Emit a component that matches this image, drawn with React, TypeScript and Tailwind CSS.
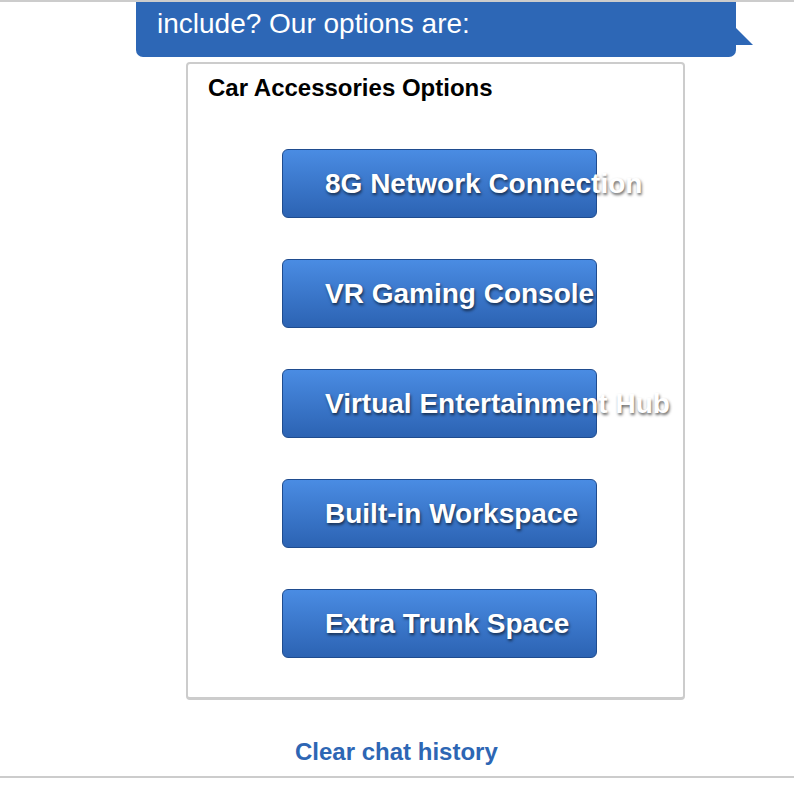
import React from 'react';

const options = [
  '8G Network Connection',
  'VR Gaming Console',
  'Virtual Entertainment Hub',
  'Built-in Workspace',
  'Extra Trunk Space',
];

const App = () => {
  return (
    <div className="w-[794px] h-[794px] bg-white overflow-hidden font-['Liberation_Sans',Arial,sans-serif]">
      <div className="h-[2px] w-full bg-[#cccccc]" />

      {/* bot message bubble, scrolled so only its last line shows */}
      <div className="relative ml-[136px] w-[600px] h-[55px] bg-[#2d67b6] rounded-b-[7px]">
        <p className="pl-[21px] pt-[6px] text-[28px] leading-[32px] text-white">
          include? Our options are:
        </p>
        <svg className="absolute left-[600px] top-[26px]" width="18" height="18" viewBox="0 0 18 18">
          <polygon points="0,0 17,17 0,17" fill="#2d67b6" />
        </svg>
      </div>

      <div className="ml-[186px] mt-[5px] w-[499px] h-[638px] border-2 border-[#cccccc] border-b-[3px] rounded-[4px] bg-white">
        <h3 className="pl-[20px] pt-[10px] text-[24px] leading-[28px] font-bold text-black">
          Car Accessories Options
        </h3>
        <div className="mt-[47px] ml-[94px] flex flex-col gap-[41px]">
          {options.map((option, index) => (
            <button
              key={index}
              className="w-[315px] h-[69px] text-left pl-[42px] rounded-[6px] border border-[#1f4c8f] bg-gradient-to-b from-[#4a8ce3] to-[#2c63b3] text-white text-[28px] font-bold whitespace-nowrap overflow-visible [text-shadow:1px_2px_3px_rgba(0,0,0,0.6)]"
            >
              {option}
            </button>
          ))}
        </div>
      </div>

      <div className="ml-[295px] mt-[38px] text-[24px] leading-[28px] font-bold text-[#2d66b4]">
        Clear chat history
      </div>
      <div className="mt-[10px] h-[2px] w-full bg-[#cccccc]" />
    </div>
  );
};

export default App;
